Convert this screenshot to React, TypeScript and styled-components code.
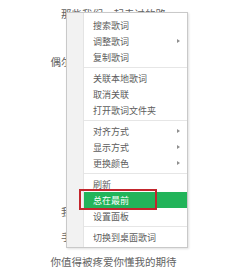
import React from "react";
import styled, { createGlobalStyle } from "styled-components";

const Global = createGlobalStyle`
  html, body { margin: 0; padding: 0; background: #ffffff; }
  body { font-family: "Noto Sans CJK SC", "Noto Sans", sans-serif; }
`;

const Page = styled.div`
  position: relative;
  width: 241px;
  height: 273px;
  overflow: hidden;
  background: #ffffff;
`;

const Lyrics = styled.div`
  display: flex;
  flex-direction: column;
  align-items: center;
  width: 227px;
  margin-top: -1px;
`;

const Line = styled.div<{ $lead?: boolean }>`
  height: ${(p) => (p.$lead ? "23px" : "25px")};
  padding-top: ${(p) => (p.$lead ? "2px" : "0")};
  line-height: 25px;
  font-size: 10.5px;
  color: #626262;
  white-space: nowrap;
`;

const Menu = styled.div`
  position: absolute;
  left: 66px;
  top: 12px;
  width: 120px;
  background: #ffffff;
  border: 1px solid #c9c9c9;
  box-shadow: 1px 1px 2px rgba(0, 0, 0, 0.12);
  display: flex;
  flex-direction: row;
`;

const Gutter = styled.div`
  flex: 0 0 16px;
  background: #f2f2f2;
  border-right: 1px solid #e4e4e4;
`;

const List = styled.div`
  flex: 1;
  display: flex;
  flex-direction: column;
  padding: 4px 0 2px;
`;

const Item = styled.div<{ $active?: boolean }>`
  position: relative;
  height: 16px;
  padding: 0 7px 0 9px;
  display: flex;
  align-items: center;
  font-size: 9px;
  color: ${(p) => (p.$active ? "#ffffff" : "#5c5c5c")};
  background: ${(p) => (p.$active ? "#22b45a" : "transparent")};
  white-space: nowrap;
`;

const Arrow = styled.span`
  margin-left: auto;
  width: 0;
  height: 0;
  border-top: 2.5px solid transparent;
  border-bottom: 2.5px solid transparent;
  border-left: 3px solid #8f8f8f;
`;

const Separator = styled.div`
  margin: 2px 0;
  height: 1px;
  background: #e6e6e6;
`;

const Callout = styled.div`
  position: absolute;
  left: -5px;
  top: -3px;
  width: 74px;
  height: 17px;
  border: 2px solid #c3262d;
  pointer-events: none;
`;

type Entry = { label: string; sub?: boolean; active?: boolean } | "sep";

const entries: Entry[] = [
  { label: "搜索歌词" },
  { label: "调整歌词", sub: true },
  { label: "复制歌词" },
  "sep",
  { label: "关联本地歌词" },
  { label: "取消关联" },
  { label: "打开歌词文件夹" },
  "sep",
  { label: "对齐方式", sub: true },
  { label: "显示方式", sub: true },
  { label: "更换颜色", sub: true },
  "sep",
  { label: "刷新" },
  { label: "总在最前", active: true },
  { label: "设置面板" },
  "sep",
  { label: "切换到桌面歌词" },
];

const lines = [
  "那些我们一起走过的路",
  "",
  "偶尔总想起你那温柔的笑容",
  "",
  "",
  "",
  "",
  "",
  "我愿意为你守护这一切",
  "手牵手走过每一个明天",
  "你值得被疼爱你懂我的期待",
];

export default function App() {
  return (
    <>
      <Global />
      <Page>
        <Lyrics>
          {lines.map((l, i) => (
            <Line key={i} $lead={i === 0}>
              {l}
            </Line>
          ))}
        </Lyrics>
        <Menu>
          <Gutter />
          <List>
            {entries.map((e, i) =>
              e === "sep" ? (
                <Separator key={i} />
              ) : (
                <Item key={i} $active={e.active}>
                  {e.label}
                  {e.sub && <Arrow />}
                  {e.active && <Callout />}
                </Item>
              )
            )}
          </List>
        </Menu>
      </Page>
    </>
  );
}
